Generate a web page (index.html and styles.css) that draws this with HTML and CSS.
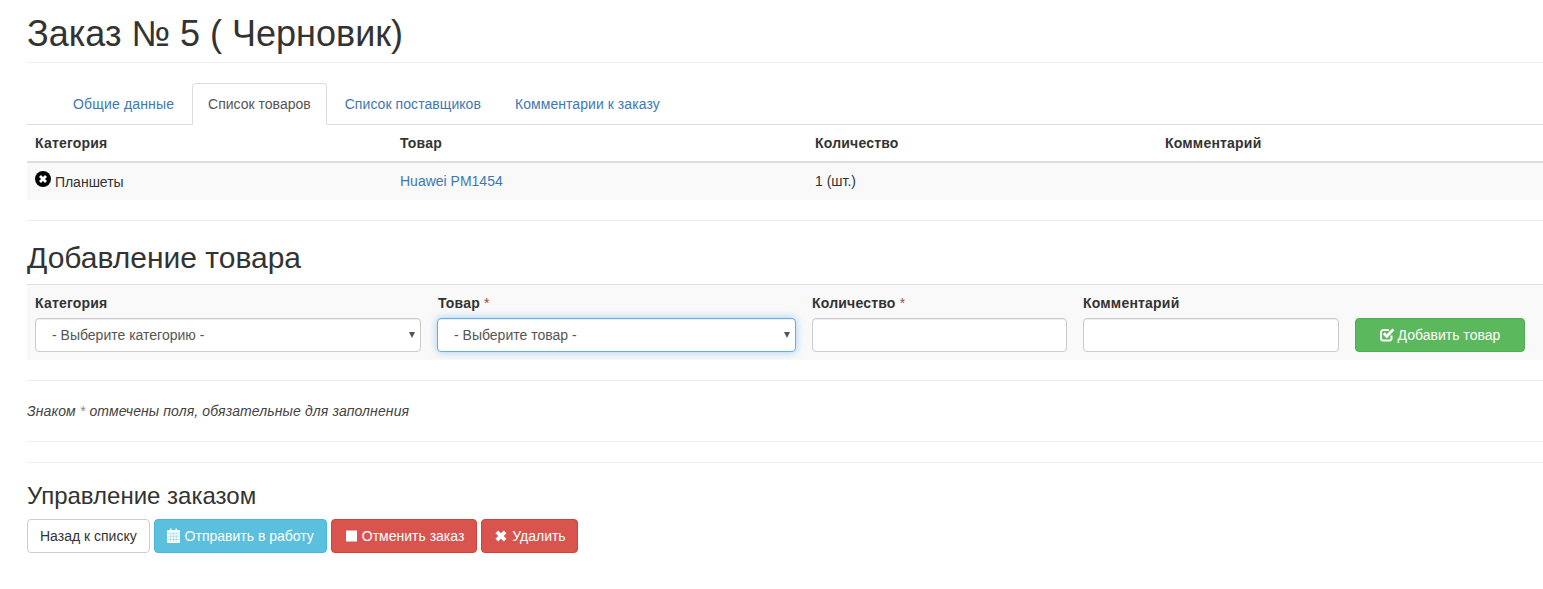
FILE: index.html
```html
<!DOCTYPE html>
<html lang="ru">
<head>
  <meta charset="UTF-8">
  <title>Заказ № 5</title>
  <link rel="stylesheet" href="styles.css">
</head>
<body>

<div class="page">
  <div class="page-header">
    <h1>Заказ № 5 ( Черновик)</h1>
  </div>

  <!-- Tabs -->
  <ul class="tabs">
    <li><a href="#">Общие данные</a></li>
    <li class="active"><a href="#">Список товаров</a></li>
    <li><a href="#">Список поставщиков</a></li>
    <li><a href="#">Комментарии к заказу</a></li>
  </ul>

  <table class="items">
    <colgroup>
      <col class="col-cat"><col class="col-item"><col class="col-qty"><col>
    </colgroup>
    <thead>
      <tr>
        <th>Категория</th>
        <th>Товар</th>
        <th>Количество</th>
        <th>Комментарий</th>
      </tr>
    </thead>
    <tbody>
      <tr>
        <td>
          <svg class="remove-icon" viewBox="0 0 16 16" width="16" height="16">
            <circle cx="8" cy="8" r="8" fill="#000"/>
            <path d="M5 5l6 6M11 5l-6 6" stroke="#fff" stroke-width="2.800"/>
          </svg>
          Планшеты
        </td>
        <td><a href="#">Huawei PM1454</a></td>
        <td>1 (шт.)</td>
        <td></td>
      </tr>
    </tbody>
  </table>

  <hr>

  <h2>Добавление товара</h2>

  <form class="add-form">
    <div class="field">
      <label>Категория</label>
      <div class="select-wrap">
        <select class="control">
          <option>- Выберите категорию -</option>
        </select>
        <span class="arrow"></span>
      </div>
    </div>
    <div class="field">
      <label class="label-shift">Товар <span class="req">*</span></label>
      <div class="select-wrap">
        <select class="control focused">
          <option>- Выберите товар -</option>
        </select>
        <span class="arrow"></span>
      </div>
    </div>
    <div class="field">
      <label>Количество <span class="req">*</span></label>
      <input class="control" type="text">
    </div>
    <div class="field">
      <label>Комментарий</label>
      <input class="control" type="text">
    </div>
    <div class="field field-btn">
      <button type="button" class="btn btn-success btn-wide">
        <svg class="icon icon-check" viewBox="0 0 15 15" width="15" height="15">
          <path d="M11.500 8.500v2.700a2.300 2.300 0 0 1-2.300 2.300H3.300A2.300 2.300 0 0 1 1 11.200V5.300A2.300 2.300 0 0 1 3.300 3H9" fill="none" stroke="#fff" stroke-width="2"/>
          <path d="M3.800 6.200l3 3 6.600-6.600" fill="none" stroke="#fff" stroke-width="2.800"/>
        </svg>
        Добавить товар
      </button>
    </div>
  </form>

  <hr>
  <p class="note">Знаком <span class="note-star">*</span> отмечены поля, обязательные для заполнения</p>
  <hr>
  <hr class="rule-tight">

  <h3>Управление заказом</h3>

  <div class="actions">
    <button type="button" class="btn btn-default">Назад к списку</button>
    <button type="button" class="btn btn-info">
      <svg class="icon icon-cal" viewBox="0 0 13 15" width="13" height="15">
        <path fill="#fff" d="M1 2h2V.5h1.500V2h4V.5H10V2h2a1 1 0 0 1 1 1v11a1 1 0 0 1-1 1H1a1 1 0 0 1-1-1V3a1 1 0 0 1 1-1z"/>
        <path stroke="#5bc0de" stroke-width=".6" stroke-opacity=".7" fill="none" d="M1 5.200h11M1 8.300h11M1 11.400h11M3.800 5.200V14M6.500 5.200V14M9.200 5.200V14"/>
      </svg>
      Отправить в работу
    </button>
    <button type="button" class="btn btn-danger">
      <svg class="icon" viewBox="0 0 14 14" width="14" height="14"><rect x="2" y="1.500" width="11" height="11" fill="#fff"/></svg>
      Отменить заказ
    </button>
    <button type="button" class="btn btn-danger btn-trim">
      <svg class="icon" viewBox="0 0 14 14" width="14" height="14">
        <path d="M2.800 2.800l8.400 8.400M11.200 2.800l-8.400 8.400" stroke="#fff" stroke-width="3.800"/>
      </svg>
      Удалить
    </button>
  </div>
</div>

</body>
</html>
```

FILE: styles.css
```css
* {
  box-sizing: border-box;
}

body {
  margin: 0;
  font-family: "Liberation Sans", Arial, sans-serif;
  font-size: 14px;
  line-height: 20px;
  color: #333;
  background: #fff;
}

a {
  color: #3d78b6;
  text-decoration: none;
}

.page {
  padding-left: 27px;
  height: 589px;
  overflow: hidden;
}

h1, h2, h3 {
  margin: 0;
  font-weight: 500;
  line-height: 1.1;
}

h1 { font-size: 36px; }
h2 { font-size: 30px; margin-bottom: 10px; }
h3 { font-size: 24px; margin-bottom: 10px; }

.page-header {
  margin: 14px 0 20px;
  padding-bottom: 8px;
  border-bottom: 1px solid #eee;
}

hr {
  margin: 20px 0;
  border: 0;
  border-top: 1px solid #eee;
}

.rule-tight {
  margin-top: 0;
  margin-bottom: 20px;
}

/* Tabs */
.tabs {
  display: flex;
  margin: 0;
  padding: 0 0 0 30px;
  list-style: none;
  border-bottom: 1px solid #ddd;
}

.tabs li {
  margin-right: 2px;
  margin-bottom: -1px;
}

.tabs a {
  display: block;
  padding: 10px 15px;
  border: 1px solid transparent;
  border-radius: 4px 4px 0 0;
  letter-spacing: .06px;
}

.tabs li:first-child a {
  letter-spacing: .16px;
}

.tabs .active a {
  color: #555;
  background: #fff;
  border-color: #ddd #ddd #fff;
  letter-spacing: 0;
}

/* Items table */
.items {
  width: 100%;
  table-layout: fixed;
  border-collapse: collapse;
}

.col-cat { width: 365px; }
.col-item { width: 415px; }
.col-qty { width: 350px; }

.items th {
  padding: 8px;
  text-align: left;
  font-weight: 700;
  letter-spacing: .2px;
  border-bottom: 2px solid #ddd;
}

.items td {
  padding: 8px;
  height: 38px;
  background: #f9f9f9;
}

.remove-icon {
  vertical-align: 0;
}

/* Add form */
.add-form {
  display: grid;
  grid-template-columns: 386px 359px 255px 256px 170px;
  column-gap: 16px;
  padding: 8px;
  background: #f9f9f9;
  border-top: 1px solid #ddd;
}

.field label {
  display: block;
  margin-bottom: 5px;
  font-weight: 700;
  letter-spacing: .2px;
}

.field .label-shift {
  padding-left: 1px;
}

.req {
  font-weight: 400;
  color: #a94442;
}

.control {
  display: block;
  width: 100%;
  height: 34px;
  padding: 6px 12px;
  font: inherit;
  color: #555;
  background: #fff;
  border: 1px solid #ccc;
  border-radius: 4px;
  box-shadow: inset 0 1px 1px rgba(0, 0, 0, .075);
  appearance: none;
  outline: 0;
}

select.control {
  padding-left: 16px;
}

.focused {
  border-color: #66afe9;
  box-shadow: inset 0 1px 1px rgba(0, 0, 0, .075), 0 0 8px rgba(102, 175, 233, .6);
}

.select-wrap {
  position: relative;
}

.arrow {
  position: absolute;
  top: 14px;
  right: 6px;
  border-top: 6px solid #555;
  border-left: 3.5px solid transparent;
  border-right: 3.5px solid transparent;
  pointer-events: none;
}

.field-btn {
  padding-top: 25px;
}

/* Buttons */
.btn {
  display: inline-block;
  height: 34px;
  padding: 6px 12px;
  font: inherit;
  border: 1px solid transparent;
  border-radius: 4px;
  color: #fff;
  white-space: nowrap;
}

.btn-wide { width: 100%; }

.btn-default { color: #333; background: #fff; border-color: #ccc; }
.btn-success { background: #5cb85c; border-color: #4cae4c; }
.btn-info { background: #5bc0de; border-color: #46b8da; }
.btn-danger { background: #d9534f; border-color: #d43f3a; }

.btn-trim { padding-right: 11px; }

.icon {
  vertical-align: -2px;
}

.icon-cal {
  margin-right: 1px;
}

.icon-check {
  margin-right: -1px;
}

.actions {
  display: flex;
  gap: 4px;
}

.note {
  margin: 0;
  font-style: italic;
  color: #444;
  letter-spacing: .12px;
}

.note-star {
  color: #888;
}
```
